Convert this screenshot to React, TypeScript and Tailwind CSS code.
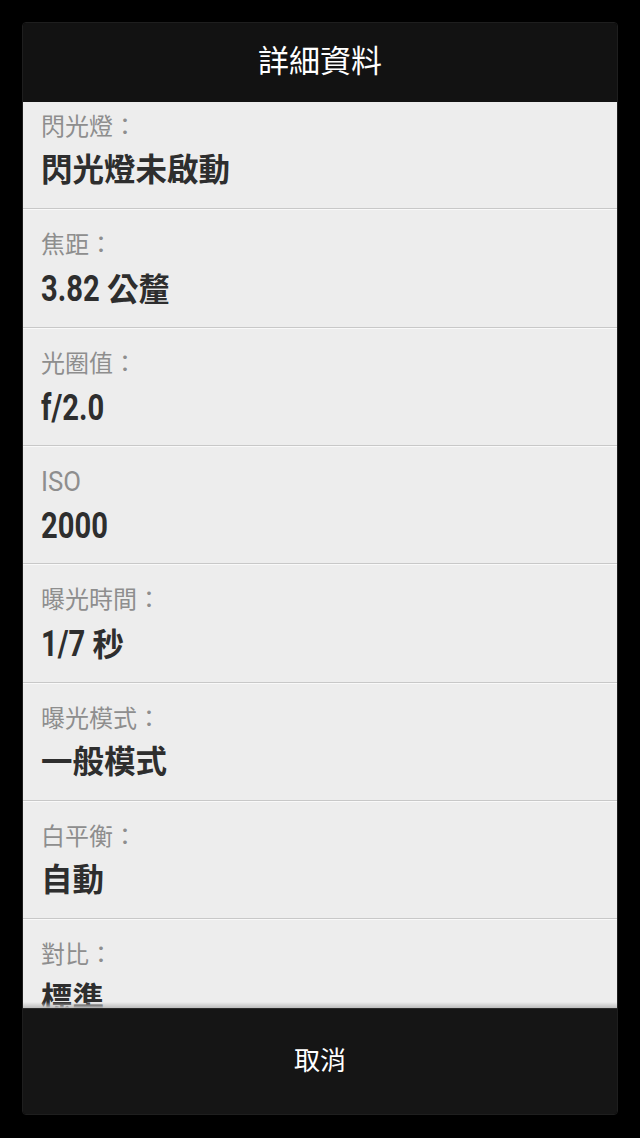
import React, { useLayoutEffect, useRef, useState } from "react";

type Row = { label: string; value: string };

const rows: Row[] = [
  { label: "閃光燈：", value: "閃光燈未啟動" },
  { label: "焦距：", value: "3.82 公釐" },
  { label: "光圈值：", value: "f/2.0" },
  { label: "ISO", value: "2000" },
  { label: "曝光時間：", value: "1/7 秒" },
  { label: "曝光模式：", value: "一般模式" },
  { label: "白平衡：", value: "自動" },
  { label: "對比：", value: "標準" },
];

const font = {
  fontFamily: 'Roboto, "Noto Sans CJK TC", "Noto Sans CJK SC", sans-serif',
};

// latin runs in the reference are a condensed face; squeeze them and give back the lost width
function Condensed({ text, scale, className }: { text: string; scale: number; className: string }) {
  const ref = useRef<HTMLSpanElement>(null);
  const [w, setW] = useState(0);
  useLayoutEffect(() => {
    if (ref.current) setW(ref.current.offsetWidth);
  }, [text]);
  return (
    <span
      ref={ref}
      className={`inline-block origin-left whitespace-pre ${className}`}
      style={{ transform: `scaleX(${scale})`, marginRight: -(1 - scale) * w }}
    >
      {text}
    </span>
  );
}

function Mixed({ text, latin, scale }: { text: string; latin: string; scale: number }) {
  const parts = text.split(/([\x00-\x7F]+)/).filter(Boolean);
  return (
    <>
      {parts.map((p, i) =>
        /^[\x00-\x7F]+$/.test(p) ? (
          <Condensed key={i} text={p} scale={scale} className={latin} />
        ) : (
          <span key={i}>{p}</span>
        )
      )}
    </>
  );
}

function DetailRow({ row }: { row: Row }) {
  return (
    <div className="h-[118.33px] shrink-0 flex flex-col border-b border-[#c8c8c8] shadow-[0_1px_0_#f9f9f9]">
      <div className="h-[36px] shrink-0" />
      <div className="h-0 flex items-center">
        <span className="text-[24px] leading-none text-[#8e8e8e] whitespace-nowrap">
          <Mixed text={row.label} latin="text-[28px]" scale={0.92} />
        </span>
      </div>
      <div className="h-[44px] shrink-0" />
      <div className="h-0 flex items-center">
        <span className="text-[31.5px] leading-none font-bold text-[#2e2e2e] whitespace-nowrap">
          <Mixed text={row.value} latin="text-[36px]" scale={0.81} />
        </span>
      </div>
    </div>
  );
}

export default function App() {
  return (
    <div className="w-[640px] h-[1138px] bg-black pt-[22px] px-[22px]" style={font}>
      <div className="w-[596px] h-[1093px] flex flex-col rounded-[4px] overflow-hidden border border-[#1e1e1e]">
        {/* Header */}
        <div className="h-[79px] shrink-0 bg-[#121212] flex items-center justify-center">
          <span className="text-[31px] text-white">詳細資料</span>
        </div>

        {/* Scrolled list */}
        <div className="flex-1 overflow-hidden bg-[#ededed] relative">
          <div className="-mt-[11px] flex flex-col [&>div]:pl-[18px]">
            {rows.map((r) => (
              <DetailRow key={r.label} row={r} />
            ))}
          </div>
          <div className="absolute left-0 right-0 bottom-0 h-[6px] bg-gradient-to-b from-transparent to-[#bdbdbd]" />
        </div>

        {/* Footer button */}
        <div className="h-[106px] shrink-0 bg-[#151515] border-t border-[#2a2a2a] flex items-center justify-center">
          <span className="text-[26px] text-white">取消</span>
        </div>
      </div>
    </div>
  );
}
